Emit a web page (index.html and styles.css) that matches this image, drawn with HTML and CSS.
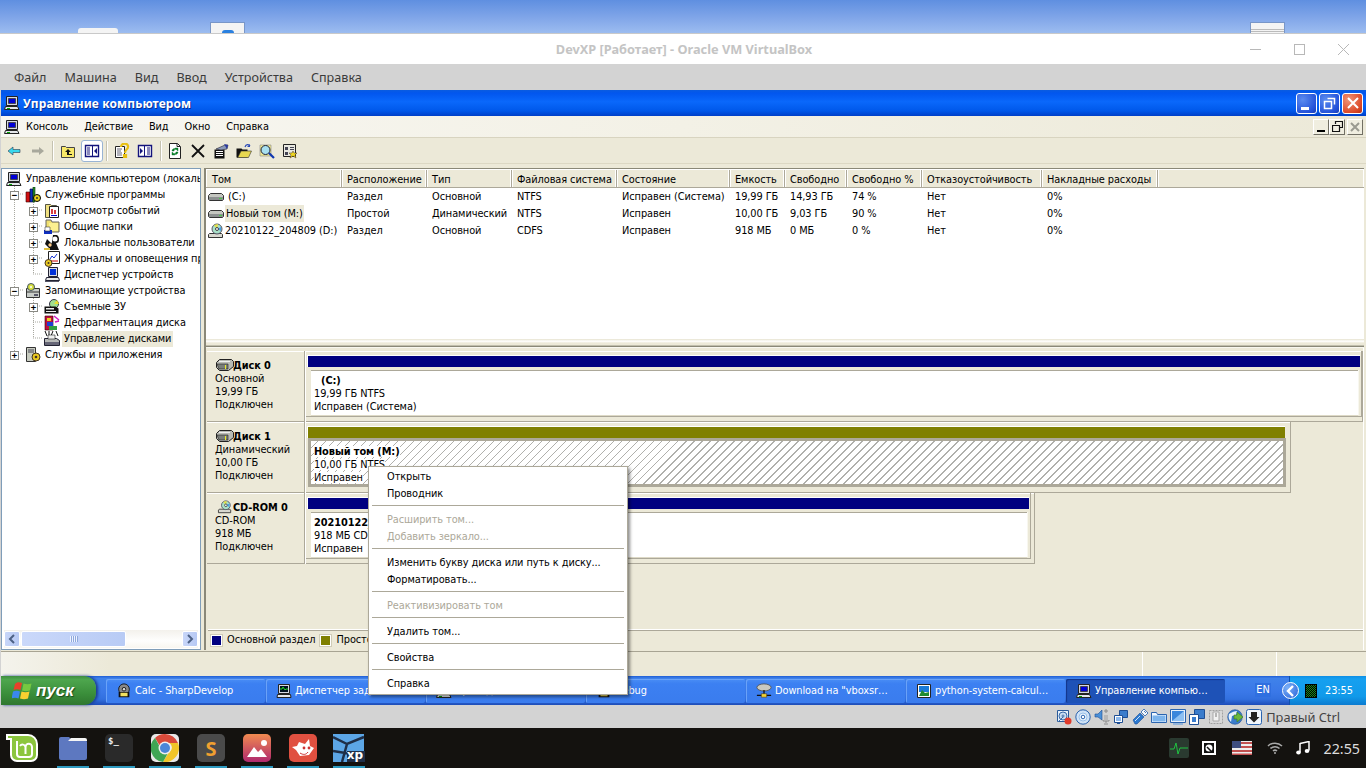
FILE: index.html
```html
<!DOCTYPE html>
<html lang="ru">
<head>
<meta charset="utf-8">
<title>DevXP [Работает] - Oracle VM VirtualBox</title>
<link rel="stylesheet" href="styles.css">
</head>
<body>
<svg class="defs" width="0" height="0">
  <symbol id="pc" viewBox="0 0 16 16"><path d="M2.500 1.500h11v9h-11z" fill="#d5d8e2" stroke="#222"/><path d="M4.500 3.500h7v5h-7z" fill="#0000d8" stroke="#445"/><path d="M1.500 11.500h12l1.500 3H.5z" fill="#e4e6ea" stroke="#222"/><path d="M3 13h3v1H3z" fill="#0a0"/></symbol>
  <symbol id="hdd" viewBox="0 0 16 16"><path d="M2.500 4.500h11l2 2v4l-1 1H1.500l-1-1v-4z" fill="#c4c6c0" stroke="#333"/><path d="M1 8h14v3H1z" fill="#8c9090"/><path d="M11 9h3v1h-3z" fill="#4c4"/></symbol>
  <symbol id="cdd" viewBox="0 0 16 16"><path d="M1.500 10.500h12l1 1v3h-14v-3z" fill="#d8d8d0" stroke="#333"/><circle cx="9" cy="6" r="5" fill="#a8e0c8" stroke="#556"/><path d="M9 6l-3-4 4-1z" fill="#e8e040"/><path d="M9 6l4-2 0 4z" fill="#40a0f0"/><circle cx="9" cy="6" r="1.500" fill="#fff" stroke="#444"/></symbol>
  <symbol id="disk" viewBox="0 0 18 14"><path d="M3.500 1.500h12l2 2v5l-5 4h-9l-3-3v-5z" fill="#b8bab4" stroke="#222"/><path d="M1 6h11v5H3z" fill="#7a7e7a" stroke="#222" stroke-width=".6"/><path d="M9 7l1 0 0 4-1 0z" fill="#ee2"/><path d="M3 3h11v1H3z" fill="#eee"/></symbol>
  <symbol id="tools" viewBox="0 0 16 16"><path d="M1 5h4v10H1z" fill="#d01010" stroke="#300" stroke-width=".6"/><path d="M5 2h3v13H5z" fill="#1030c0" stroke="#003" stroke-width=".6"/><path d="M8 0h2v15H8z" fill="#2a9030" stroke="#030" stroke-width=".6"/><circle cx="12" cy="11" r="3.500" fill="#e8d020" stroke="#000"/><circle cx="12" cy="11" r="1" fill="#333"/></symbol>
  <symbol id="event" viewBox="0 0 16 16"><path d="M1.500 1.500h5l1 1h5v12h-11z" fill="#f0e080" stroke="#554"/><path d="M5.500 3.500h9v11h-9z" fill="#fff" stroke="#222"/><path d="M8 11V6M11 11V7" stroke="#c00" stroke-width="1.500"/><path d="M7 12.500h6" stroke="#00c"/></symbol>
  <symbol id="shared" viewBox="0 0 16 16"><path d="M2 1h5l1 2h7v10H2z" fill="#f0e070" stroke="#666"/><path d="M5 4h9v8H5z" fill="#fbf090"/><path d="M0 11h8v4H0z" fill="#1030c0"/><path d="M1 8h5v4H1z" fill="#fff" stroke="#222" stroke-width=".5"/></symbol>
  <symbol id="users" viewBox="0 0 16 16"><path d="M9 0c4-1 6 1 6 4s-1 4-3 4l3 7H5l3-8z" fill="#111"/><path d="M3 4l8 8-4 3-6-6z" fill="#111"/><circle cx="6" cy="10" r="1.700" fill="#fc8"/><circle cx="11" cy="4" r="2.500" fill="#fff"/><path d="M0 13h6v2H0z" fill="#e0c040"/></symbol>
  <symbol id="logs" viewBox="0 0 16 16"><path d="M4.500 .5h11v12h-11z" fill="#fff" stroke="#222"/><path d="M6 8l2-3 2 2 3-4" fill="none" stroke="#1030d0"/><path d="M6 10h8" stroke="#c00"/><circle cx="4.500" cy="12" r="3.500" fill="#e8c820" stroke="#432"/><circle cx="4.500" cy="12" r="1" fill="#432"/></symbol>
  <symbol id="devmgr" viewBox="0 0 16 16"><path d="M4.500 .5h9v9h-9z" fill="#d8dae0" stroke="#223"/><path d="M6 2h6v6H6z" fill="#0030d8"/><path d="M2.500 10.500h12l1 3h-14z" fill="#e8e8e8" stroke="#223"/><path d="M1 14.500h14" stroke="#556"/></symbol>
  <symbol id="storage" viewBox="0 0 16 16"><path d="M1.500 5.500h13v9h-13z" fill="#c8ccc8" stroke="#333"/><path d="M1 9h14" stroke="#333"/><path d="M9 11h4v2H9z" fill="#556"/><circle cx="6" cy="4" r="3.500" fill="#d8e040" stroke="#456"/><circle cx="6" cy="4" r="1" fill="#fff"/></symbol>
  <symbol id="removable" viewBox="0 0 16 16"><circle cx="10" cy="5" r="4.500" fill="#a0e090" stroke="#334"/><path d="M10 5l3-4 2 4z" fill="#e8e030"/><path d="M.5 7.500h11l3 2v5H.5z" fill="#111"/><path d="M2 9h8v1.500H2zM2 12h10v1H2z" fill="#eee"/></symbol>
  <symbol id="defrag" viewBox="0 0 16 16"><path d="M1 1h8v14H1z" fill="#c01040" stroke="#300" stroke-width=".6"/><path d="M3 3h4v3H3z" fill="#e8d020"/><path d="M3 7h6v4H3z" fill="#2040d0"/><path d="M5 11h8v4H5z" fill="#30a040"/><path d="M10 1l5 4M11 7l4-1" stroke="#d020c0" stroke-width="1.600"/></symbol>
  <symbol id="diskman" viewBox="0 0 16 16"><path d="M1 0l2 5M5 0v5M9 0l-2 5M12 0l2 5" stroke="#111"/><path d="M.5 7.500h12l3 2v5H.5z" fill="#b8bab8" stroke="#223"/><path d="M1 11h14v3H1z" fill="#667"/><path d="M4 4h7v4H4z" fill="#eee" stroke="#222" stroke-width=".6"/></symbol>
  <symbol id="services" viewBox="0 0 16 16"><path d="M1.500 .5h9v14h-9z" fill="#c8ccc0" stroke="#333"/><path d="M3 3h6M3 5h6" stroke="#445"/><circle cx="11" cy="10" r="4" fill="#e8c820" stroke="#432"/><circle cx="11" cy="10" r="1.300" fill="#432"/></symbol>
  <symbol id="back" viewBox="0 0 16 16"><path d="M2 8l5-4v2.500h7v3H7V12z" fill="#38d8ee" stroke="#2a3a50" stroke-width=".6"/></symbol>
  <symbol id="fwd" viewBox="0 0 16 16"><path d="M15 8l-5-4v2.500H3v3h7V12z" fill="#a8a89c"/></symbol>
  <symbol id="up" viewBox="0 0 16 16"><path d="M1.500 3.500h4l1 1h8v10h-13z" fill="#f8e868" stroke="#444"/><path d="M5 9l3-3 3 3H9v2h3v1H7V9z" fill="#111"/></symbol>
  <symbol id="split" viewBox="0 0 16 16"><path d="M1.500 2.500h13v11h-13z" fill="#fff" stroke="#14147c" stroke-width="1.400"/><path d="M8 3h1v10H8z" fill="#14147c"/><path d="M3 5h3M3 7h3M3 9h3M3 11h3" stroke="#14147c"/><path d="M13 5v6l-3-3z" fill="#14147c"/></symbol>
  <symbol id="help" viewBox="0 0 16 16"><path d="M1.500 3.500h9v11h-9z" fill="#fff" stroke="#222"/><path d="M3 6h5M3 8h4M3 10h5M3 12h5" stroke="#667"/><path d="M7 4c0-5 8-4 7 0 0 3-3 2-3 6M10 12h2v2h-2z" fill="none" stroke="#e8c010" stroke-width="2.200"/></symbol>
  <symbol id="splitb" viewBox="0 0 16 16"><path d="M1.500 2.500h13v11h-13z" fill="#fff" stroke="#14147c" stroke-width="1.400"/><path d="M7 3h1v10H7z" fill="#14147c"/><path d="M10 5h3M10 7h3M10 9h3M10 11h3" stroke="#14147c"/><path d="M3 5v6l3-3z" fill="#14147c"/></symbol>
  <symbol id="refresh" viewBox="0 0 16 16"><path d="M2.500 .5h8l3 3v12h-11z" fill="#fff" stroke="#222"/><path d="M10 .5v3h3" fill="none" stroke="#222"/><path d="M5 8c0-2 2-3 4-2l-1-1 3 0 0 3-1-1c-1-1-3-1-3 1zM11 9c0 2-2 3-4 2l1 1-3 0 0-3 1 1c1 1 3 1 3-1z" fill="#0a8a20" stroke="#063" stroke-width=".4"/></symbol>
  <symbol id="del" viewBox="0 0 16 16"><path d="M2 2l12 12M14 2L2 14" stroke="#111" stroke-width="1.800"/></symbol>
  <symbol id="prop" viewBox="0 0 16 16"><path d="M1.500 6.500h10v9h-10z" fill="#111"/><path d="M3 8h7v1H3zM3 10h7v1H3zM3 12h7v1H3z" fill="#fff"/><path d="M3 6l9-4 3 0-1 4-6 1z" fill="#8a98b8" stroke="#223" stroke-width=".6"/><path d="M11 1l4 1-1 4z" fill="#2838a0"/></symbol>
  <symbol id="open" viewBox="0 0 16 16"><path d="M.5 5.500h5l1 1h5v8H.5z" fill="#111"/><path d="M2 14L5 8h10.500l-3 6.500H1z" fill="#e8d850" stroke="#333" stroke-width=".6"/><path d="M9 4c1-3 4-3 5-1" fill="none" stroke="#2a4ab8" stroke-width="1.200"/><path d="M14 1v3h-3z" fill="#2a4ab8"/></symbol>
  <symbol id="find" viewBox="0 0 16 16"><path d="M1 2h11v11H1z" fill="#f0e890" stroke="#888" stroke-width=".6"/><circle cx="6.500" cy="7" r="4.500" fill="#a8e0f0" stroke="#223"/><path d="M10 10l5 5" stroke="#1038b0" stroke-width="2.200"/></symbol>
  <symbol id="wiz" viewBox="0 0 16 16"><path d="M1.500 1.500h12v12h-12z" fill="#e8e8e0" stroke="#222"/><path d="M3 4h3v3H3zM8 4h4v1H8zM8 6h4v1H8zM3 9h3v3H3z" fill="#445"/><path d="M11 8l1 2 3 0-2 2 1 3-3-2-3 2 1-3-2-2 3 0z" fill="#f0d820" stroke="#432" stroke-width=".5"/></symbol>
  <symbol id="gear" viewBox="0 0 18 18"><circle cx="9" cy="7" r="6" fill="#888" stroke="#111"/><circle cx="9" cy="7" r="2" fill="#ddd" stroke="#111"/><path d="M3 10h12v6H3z" fill="#111"/><path d="M5 11h8v4H5z" fill="#f0e060"/></symbol>
  <symbol id="net" viewBox="0 0 18 18"><ellipse cx="9" cy="5" rx="8" ry="4" fill="#c8c8c0" stroke="#555"/><path d="M9 8v5M1 14h16" stroke="#111" stroke-width="1.400"/><path d="M6 12h6v4H6z" fill="#f0d030" stroke="#432" stroke-width=".6"/></symbol>
  <symbol id="pic" viewBox="0 0 16 16"><path d="M1.500 1.500h13v13h-13z" fill="#fff" stroke="#222"/><path d="M3 3h10v6H3z" fill="#1a7ad8"/><path d="M3 13l3-6 3 3 4-1v4z" fill="#1e8a30"/></symbol>
  <symbol id="taskmgr" viewBox="0 0 16 16"><path d="M2.500 1.500h11v9h-11z" fill="#d5d8e2" stroke="#222"/><path d="M4 3h8v6H4z" fill="#012"/><path d="M4 6l2 0 1-2 2 3 1-1h2" fill="none" stroke="#2d2"/><path d="M1.500 11.500h13l.5 3H1z" fill="#e4e6ea" stroke="#222"/></symbol>
  <symbol id="flag" viewBox="0 0 22 20"><path d="M3 3c2-2 4-2 7-1l-1.500 7c-2-1-5-1-7 0z" fill="#e8402a"/><path d="M11.500 2.500c3 1 5 1 8 0l-1.500 7c-3 1-5 1-8 0z" fill="#76c840"/><path d="M1 10.500c2-1 5-1 7 0l-1.500 7c-2-1-5-1-7 0z" fill="#3a88ee"/><path d="M9.500 10.500c3 1 5 1 8 0l-1.500 7c-3 1-5 1-8 0z" fill="#f8d030"/></symbol>
  <symbol id="vs-hdd" viewBox="0 0 16 16"><path d="M1.500 1.500h11v11h-11z" fill="#e6f0fa" stroke="#2a5a9a"/><circle cx="7" cy="7" r="4" fill="#c8dcf0" stroke="#3a6aa8"/><circle cx="7" cy="7" r="1" fill="#fff" stroke="#3a6aa8"/><path d="M2 13l5-5" stroke="#3a6aa8"/><circle cx="12" cy="12" r="3.500" fill="#e03a2a"/></symbol>
  <symbol id="vs-cd" viewBox="0 0 16 16"><circle cx="8" cy="8" r="7.200" fill="#cfe2f6" stroke="#2a64b0"/><circle cx="8" cy="8" r="4" fill="#eef6ff" stroke="#9ac0e8"/><circle cx="8" cy="8" r="1.800" fill="#fff" stroke="#2a64b0"/></symbol>
  <symbol id="vs-aud" viewBox="0 0 16 16"><path d="M1 5h3l4-4v10L4 8H1z" fill="#4a90d8" stroke="#1e4e94" stroke-width=".6"/><path d="M10 6h4v5h-4z" fill="#b8b8b8"/><path d="M11 1h2v2h-2zM9 11v1h6v-1M12 12v2M10 15h4" stroke="#8a8a8a" fill="none"/></symbol>
  <symbol id="vs-net" viewBox="0 0 16 16"><path d="M6.500 1.500h8v7h-8z" fill="#3a7ccc" stroke="#1e4e94"/><path d="M1.500 6.500h8v7h-8z" fill="#fff" stroke="#1e4e94"/><path d="M3 8h5v4H3z" fill="#8cb8ec"/><path d="M4 14.500h3" stroke="#1e4e94"/></symbol>
  <symbol id="vs-usb" viewBox="0 0 16 16"><path d="M1 11l7-7 4 4-7 7H3z" fill="#2a78d0" stroke="#1e4e94" stroke-width=".6"/><path d="M9 3l3-3 4 4-3 3z" fill="#f4f8fc" stroke="#4a7ab8"/><path d="M12 2l1 1M14 4l-1-1" stroke="#4a7ab8"/><path d="M3 12l5-5" stroke="#cfe4fa"/></symbol>
  <symbol id="vs-fold" viewBox="0 0 16 16"><path d="M.5 3.500h5l1 2h9v8H.5z" fill="#f0f7ff" stroke="#2a64b0"/><path d="M1.500 6.500h13v6h-13z" fill="#7cb4ec"/></symbol>
  <symbol id="vs-disp" viewBox="0 0 16 16"><path d="M.5 .5h15v13H.5z" fill="#e6f0fa" stroke="#2a64b0"/><path d="M2 2h12v10H2z" fill="#3a86dc"/><path d="M2 12L14 2v10z" fill="#8ec0f2"/><path d="M3 15h10" stroke="#7aa8dc" stroke-width="1.400"/></symbol>
  <symbol id="vs-shot" viewBox="0 0 16 16"><path d="M5.500 .5h10v9h-10z" fill="#3a7ccc" stroke="#1e4e94"/><path d="M.5 5.500h9v10h-9z" fill="#fff" stroke="#1e4e94"/><path d="M3 8h4v5H3z" fill="#3a7ccc"/></symbol>
  <symbol id="vs-chip" viewBox="0 0 16 16"><path d="M1.500 1.500h13v13h-13z" fill="#d8d8d8" stroke="#a0a0a0" stroke-dasharray="2 1"/><path d="M5 3h6v9H5z" fill="#f2f2f2" stroke="#a8a8a8"/><path d="M8 4v4" stroke="#a0a0a0" stroke-width="1.500"/></symbol>
  <symbol id="vs-glob" viewBox="0 0 16 16"><circle cx="8" cy="8" r="7.300" fill="#3a7ccc" stroke="#1e4e94" stroke-width=".6"/><path d="M2 5c3-2 6-3 8-3l-1 4-4 1-1 6c-2-2-3-5-2-8z" fill="#e8f2fc"/><path d="M7 6h3V3l6 5-6 5v-3H7z" fill="#6cb83c" stroke="#3a7a1c" stroke-width=".6"/></symbol>
  <symbol id="vs-cap" viewBox="0 0 16 16"><rect x=".5" y=".5" width="15" height="15" rx="2" fill="#f0f6fc" stroke="#2a64b0"/><path d="M5 3h6v5h2.500L8 13.500 2.500 8H5z" fill="#222"/></symbol>
</svg>

<div class="sky">
  <div class="desk-a"></div>
  <div class="desk-b"><span class="arc"></span></div>
  <div class="desk-c"></div>
</div>

<div class="vbox">
  <header class="vb-title">
    <span class="vb-name">DevXP [Работает] - Oracle VM VirtualBox</span>
    <div class="vb-controls">
      <span class="vb-min"></span>
      <span class="vb-max"></span>
      <svg class="vb-close" width="11" height="11" viewBox="0 0 11 11"><path d="M0 0l11 11M11 0L0 11" stroke="#b8b8b8"/></svg>
    </div>
  </header>
  <nav class="vb-menu">
    <span>Файл</span><span>Машина</span><span>Вид</span><span>Ввод</span><span>Устройства</span><span>Справка</span>
  </nav>

  <div class="guest">
    <div class="xp-title">
      <svg class="i16"><use href="#pc"/></svg>
      <span class="xp-name">Управление компьютером</span>
      <div class="xp-btns">
        <span class="xb"><span class="xb-min"></span></span>
        <span class="xb"><svg width="13" height="13" viewBox="0 0 13 13"><path d="M4.500 1.500h7v6M1.500 4.500h7v7h-7z" fill="none" stroke="#fff" stroke-width="1.500"/></svg></span>
        <span class="xb red"><svg width="12" height="12" viewBox="0 0 12 12"><path d="M1 1l10 10M11 1L1 11" stroke="#fff" stroke-width="2"/></svg></span>
      </div>
    </div>

    <div class="xp-menu">
      <svg class="i16"><use href="#pc"/></svg>
      <div class="xp-menu-items"><span>Консоль</span><span>Действие</span><span>Вид</span><span>Окно</span><span>Справка</span></div>
      <div class="mdi">
        <span class="mdi-b"><span class="m-min"></span></span>
        <span class="mdi-b"><svg width="11" height="11" viewBox="0 0 11 11"><path d="M3.500 3V.5h7v6H8M.5 4.500h7v6h-7z" fill="none" stroke="#111" stroke-width="1.200"/></svg></span>
        <span class="mdi-b off"><svg width="10" height="10" viewBox="0 0 10 10"><path d="M1 1l8 8M9 1L1 9" stroke="#9a9a90" stroke-width="2"/></svg></span>
      </div>
    </div>

    <div class="xp-tools">
      <svg class="t"><use href="#back"/></svg>
      <svg class="t"><use href="#fwd"/></svg>
      <span class="sep"></span>
      <svg class="t"><use href="#up"/></svg>
      <span class="tb-on"><svg class="t"><use href="#split"/></svg></span>
      <span class="sep"></span>
      <svg class="t"><use href="#help"/></svg>
      <svg class="t"><use href="#splitb"/></svg>
      <span class="sep s3"></span>
      <svg class="t"><use href="#refresh"/></svg>
      <svg class="t"><use href="#del"/></svg>
      <svg class="t"><use href="#prop"/></svg>
      <svg class="t"><use href="#open"/></svg>
      <svg class="t"><use href="#find"/></svg>
      <svg class="t"><use href="#wiz"/></svg>
    </div>

    <div class="xp-main">
      <aside class="tree">
        <svg class="tree-lines" width="200" height="400">
          <path d="M14.500 186V358M14 194h10M14 290h10M14 354h10M33.500 202V274M33 210h10M33 226h10M33 242h10M33 258h10M33 274h10M33.500 298V338M33 306h10M33 322h10M33 338h10" stroke="#a8a8a0" stroke-dasharray="1 1" fill="none"/>
        </svg>
        <div class="tree-body">
          <div class="tr l0"><svg class="i16"><use href="#pc"/></svg><span>Управление компьютером (локаль</span></div>
          <div class="tr l1"><b class="ex">−</b><svg class="i16"><use href="#tools"/></svg><span>Служебные программы</span></div>
          <div class="tr l2"><b class="ex">+</b><svg class="i16"><use href="#event"/></svg><span>Просмотр событий</span></div>
          <div class="tr l2"><b class="ex">+</b><svg class="i16"><use href="#shared"/></svg><span>Общие папки</span></div>
          <div class="tr l2"><b class="ex">+</b><svg class="i16"><use href="#users"/></svg><span>Локальные пользователи</span></div>
          <div class="tr l2"><b class="ex">+</b><svg class="i16"><use href="#logs"/></svg><span>Журналы и оповещения пр</span></div>
          <div class="tr l2"><b class="ex none"></b><svg class="i16"><use href="#devmgr"/></svg><span>Диспетчер устройств</span></div>
          <div class="tr l1"><b class="ex">−</b><svg class="i16"><use href="#storage"/></svg><span>Запоминающие устройства</span></div>
          <div class="tr l2"><b class="ex">+</b><svg class="i16"><use href="#removable"/></svg><span>Съемные ЗУ</span></div>
          <div class="tr l2"><b class="ex none"></b><svg class="i16"><use href="#defrag"/></svg><span>Дефрагментация диска</span></div>
          <div class="tr l2"><b class="ex none"></b><svg class="i16"><use href="#diskman"/></svg><span class="sel">Управление дисками</span></div>
          <div class="tr l1"><b class="ex">+</b><svg class="i16"><use href="#services"/></svg><span>Службы и приложения</span></div>
        </div>
        <div class="hscroll">
          <span class="sb-btn"><svg width="8" height="10" viewBox="0 0 8 10"><path d="M6 1L2 5l4 4" fill="none" stroke="#4d6185" stroke-width="2"/></svg></span>
          <span class="sb-thumb"><span class="grip"></span></span>
          <span class="sb-btn end"><svg width="8" height="10" viewBox="0 0 8 10"><path d="M2 1l4 4-4 4" fill="none" stroke="#4d6185" stroke-width="2"/></svg></span>
        </div>
      </aside>

      <section class="right">
        <div class="list">
          <div class="row head">
            <span>Том</span><span>Расположение</span><span>Тип</span><span>Файловая система</span><span>Состояние</span><span>Емкость</span><span>Свободно</span><span>Свободно %</span><span>Отказоустойчивость</span><span>Накладные расходы</span><span></span>
          </div>
          <div class="row">
            <span class="vol"><svg class="i16"><use href="#hdd"/></svg><em class="gap">(C:)</em></span><span>Раздел</span><span>Основной</span><span>NTFS</span><span>Исправен (Система)</span><span>19,99 ГБ</span><span>14,93 ГБ</span><span>74 %</span><span>Нет</span><span>0%</span><span></span>
          </div>
          <div class="row">
            <span class="vol"><svg class="i16"><use href="#hdd"/></svg><em class="hl">Новый том (M:)</em></span><span>Простой</span><span>Динамический</span><span>NTFS</span><span>Исправен</span><span>10,00 ГБ</span><span>9,03 ГБ</span><span>90 %</span><span>Нет</span><span>0%</span><span></span>
          </div>
          <div class="row">
            <span class="vol"><svg class="i16"><use href="#cdd"/></svg><em>20210122_204809 (D:)</em></span><span>Раздел</span><span>Основной</span><span>CDFS</span><span>Исправен</span><span>918 МБ</span><span>0 МБ</span><span>0 %</span><span>Нет</span><span>0%</span><span></span>
          </div>
        </div>
        <div class="split-h"></div>
        <div class="graph">
          <div class="disk">
            <div class="dlabel">
              <div class="dname"><svg class="dico"><use href="#disk"/></svg>Диск 0</div>
              <div>Основной</div><div>19,99 ГБ</div><div>Подключен</div>
            </div>
            <div class="dvol w0">
              <div class="dinner">
                <div class="bar navy"></div>
                <div class="part">
                  <div class="pname pad">(C:)</div><div>19,99 ГБ NTFS</div><div>Исправен (Система)</div>
                </div>
              </div>
            </div>
          </div>
          <div class="disk">
            <div class="dlabel">
              <div class="dname"><svg class="dico"><use href="#disk"/></svg>Диск 1</div>
              <div>Динамический</div><div>10,00 ГБ</div><div>Подключен</div>
            </div>
            <div class="dvol w1">
              <div class="dinner">
                <div class="bar olive"></div>
                <div class="part hatch">
                  <div class="pname"><i>Новый том  (M:)</i></div><div><i>10,00 ГБ NTFS</i></div><div><i>Исправен</i></div>
                </div>
              </div>
            </div>
          </div>
          <div class="disk">
            <div class="dlabel">
              <div class="dname"><svg class="dico"><use href="#cdd"/></svg>CD-ROM 0</div>
              <div>CD-ROM</div><div>918 МБ</div><div>Подключен</div>
            </div>
            <div class="dvol w2">
              <div class="dinner">
                <div class="bar navy"></div>
                <div class="part">
                  <div class="pname">20210122_204809 (D:)</div><div>918 МБ CDFS</div><div>Исправен</div>
                </div>
              </div>
            </div>
          </div>
          <div class="legend">
            <span class="sw navy"></span><span class="lg1">Основной раздел</span><span class="sw olive"></span><span>Простой том</span>
          </div>
        </div>
      </section>
    </div>

    <div class="xp-status"><span class="st1"></span><span class="st2"></span></div>

    <div class="taskbar">
      <div class="start"><svg width="22" height="20"><use href="#flag"/></svg><span>пуск</span></div>
      <div class="tasks">
        <div class="task"><svg class="i18"><use href="#gear"/></svg><span>Calc - SharpDevelop</span></div>
        <div class="task"><svg class="i18"><use href="#taskmgr"/></svg><span>Диспетчер задач</span></div>
        <div class="task"><svg class="i18"><use href="#pc"/></svg><span>Проводник</span></div>
        <div class="task"><svg class="i18"><use href="#gear"/></svg><span>Debug</span></div>
        <div class="task"><svg class="i18"><use href="#net"/></svg><span>Download на "vboxsr…</span></div>
        <div class="task"><svg class="i18"><use href="#pic"/></svg><span>python-system-calcul…</span></div>
        <div class="task active"><svg class="i18"><use href="#pc"/></svg><span>Управление компью…</span></div>
      </div>
      <span class="lang">EN</span>
      <div class="tray">
        <span class="tray-arrow"><svg width="10" height="12" viewBox="0 0 10 12"><path d="M7 1L2 6l5 5" fill="none" stroke="#fff" stroke-width="2.400"/></svg></span>
        <span class="tray-ico"></span>
        <span class="clock">23:55</span>
      </div>
    </div>
  </div>

  <footer class="vb-status">
    <svg class="i16"><use href="#vs-hdd"/></svg><svg class="i16"><use href="#vs-cd"/></svg><svg class="i16"><use href="#vs-aud"/></svg><svg class="i16"><use href="#vs-net"/></svg><svg class="i16"><use href="#vs-usb"/></svg><svg class="i16"><use href="#vs-fold"/></svg><svg class="i16"><use href="#vs-disp"/></svg><svg class="i16"><use href="#vs-shot"/></svg><svg class="i16"><use href="#vs-chip"/></svg><svg class="i16"><use href="#vs-glob"/></svg><svg class="i16"><use href="#vs-cap"/></svg>
    <span class="ctrl">Правый Ctrl</span>
  </footer>
</div>

<footer class="panel">
  <div class="launch">
    <svg class="mint" width="32" height="28" viewBox="0 0 32 28"><path d="M0 0h22a10 10 0 0 1 10 10v11a7 7 0 0 1-7 7H11a7 7 0 0 1-7-7V6H0z" fill="#fff"/><path d="M2 2h20a8 8 0 0 1 8 8v11a5 5 0 0 1-5 5H11a5 5 0 0 1-5-5V4H2z" fill="#8cc63e"/><path d="M11 7v13a3 3 0 0 0 3 3h9a3 3 0 0 0 3-3V13a3 3 0 0 0-6.500 0v7M19.500 13a3 3 0 0 0-5.500-1" fill="none" stroke="#fff" stroke-width="2"/></svg>
    <div class="app ap-folder"><svg width="30" height="24" viewBox="0 0 30 24"><path d="M1 3a2 2 0 0 1 2-2h8l3 3h13a2 2 0 0 1 2 2v16a2 2 0 0 1-2 2H3a2 2 0 0 1-2-2z" fill="#5d78c0"/><path d="M1 5h9l3-3h14a2 2 0 0 1 2 2v1z" fill="#f4f4f4"/></svg></div>
    <div class="app ap-term"><span>$_</span></div>
    <div class="app"><svg width="28" height="28" viewBox="0 0 28 28"><rect width="28" height="28" rx="5" fill="#e8e8e8"/><path d="M14 0a14 14 0 0 1 13 9H14a5 5 0 0 0-5 3L4 4A14 14 0 0 1 14 0z" fill="#d94a3a"/><path d="M27 9a14 14 0 0 1-15 19l6-10a5 5 0 0 0 0-9z" fill="#f0c428"/><path d="M12 28A14 14 0 0 1 4 4l6 11a5 5 0 0 0 7 4z" fill="#3fa654"/><circle cx="14" cy="14" r="6.500" fill="#eee"/><circle cx="14" cy="14" r="5" fill="#4a86d8"/></svg></div>
    <div class="app ap-subl"><span>S</span></div>
    <div class="app ap-img"><svg width="28" height="28" viewBox="0 0 28 28"><circle cx="21" cy="9" r="3" fill="#fff"/><path d="M4 23l7-10 4 5 3-3 6 8z" fill="#fff"/></svg></div>
    <div class="app ap-gimp"><svg width="28" height="28" viewBox="0 0 28 28"><path d="M3 13l5-1 2-4 6 2 4-5 1 7 4 2-5 7-9 1-4-6z" fill="#fff"/><circle cx="15" cy="14" r="1.400" fill="#c33"/><circle cx="20" cy="14" r="1.400" fill="#c33"/><path d="M11 19c3 2 6 2 8-1" stroke="#c33" fill="none"/></svg></div>
    <div class="app ap-xp"><svg width="32" height="28" viewBox="0 0 32 28"><path d="M0 0h31v28H0z" fill="#5ca6e6"/><path d="M0 3l14 7L31 3M14 10L9 28M0 17l31 5" stroke="#1f2f48" stroke-width="2.500" fill="none"/><path d="M14 17h18v11H14z" fill="#1f2f48"/></svg><span>xp</span></div>
  </div>
  <div class="sys">
    <svg class="sys-mon" width="20" height="20" viewBox="0 0 20 20"><rect width="20" height="20" rx="2" fill="#2a3a30"/><path d="M1 11h4l2-6 2 11 2-6h8" fill="none" stroke="#20c040"/></svg>
    <svg class="sys-disk" width="14" height="14" viewBox="0 0 14 14"><rect x="1" y="1" width="12" height="12" fill="#111" stroke="#fff" stroke-width="2"/><circle cx="7" cy="7" r="3.500" fill="#fff"/><path d="M5 6l5 5" stroke="#111" stroke-width="1.500"/></svg>
    <svg class="sys-flag" width="20" height="14" viewBox="0 0 20 14"><path d="M0 0h20v14H0z" fill="#eee"/><path d="M0 1h20v2H0zM0 5h20v2H0zM0 9h20v2H0zM0 12.500h20V14H0z" fill="#c25050"/><path d="M0 0h9v7H0z" fill="#3e4e80"/></svg>
    <svg class="sys-wifi" width="16" height="12" viewBox="0 0 16 12"><path d="M1 4a10 10 0 0 1 14 0M3.500 6.500a6.500 6.500 0 0 1 9 0M6 9a3 3 0 0 1 4 0" fill="none" stroke="#aaa" stroke-width="1.500"/><circle cx="8" cy="11" r="1" fill="#aaa"/></svg>
    <svg class="sys-note" width="14" height="14" viewBox="0 0 14 14"><path d="M4 2.500l9-2v9" fill="none" stroke="#fff" stroke-width="1.500"/><path d="M4 2v9" stroke="#fff" stroke-width="1.500"/><ellipse cx="2.500" cy="11.500" rx="2.300" ry="2" fill="#fff"/><ellipse cx="11" cy="10" rx="2.300" ry="2" fill="#fff"/></svg>
    <span class="sys-clock">22:55</span>
  </div>
  <div class="dots"><span></span><span></span><span></span><span></span><span></span><span></span><span></span></div>
</footer>

<div class="ctx">
  <div class="mi">Открыть</div>
  <div class="mi">Проводник</div>
  <div class="ms"></div>
  <div class="mi dis">Расширить том...</div>
  <div class="mi dis">Добавить зеркало...</div>
  <div class="ms"></div>
  <div class="mi">Изменить букву диска или путь к диску...</div>
  <div class="mi">Форматировать...</div>
  <div class="ms"></div>
  <div class="mi dis">Реактивизировать том</div>
  <div class="ms"></div>
  <div class="mi">Удалить том...</div>
  <div class="ms"></div>
  <div class="mi">Свойства</div>
  <div class="ms"></div>
  <div class="mi">Справка</div>
</div>
</body>
</html>
```

FILE: styles.css
```css
* { box-sizing: border-box; }
html, body { margin: 0; padding: 0; }
body {
  width: 1366px; height: 768px; overflow: hidden; position: relative;
  font: 9.8px/16px "DejaVu Sans", sans-serif; letter-spacing: -.08px; color: #000; background: #7fa5e8;
}
.defs { position: absolute; }
em, i { font-style: normal; }
svg { display: block; flex: none; }
.i16 { width: 16px; height: 16px; }
.i18 { width: 16px; height: 16px; }

/* desktop strip */
.sky { height: 33px; position: relative; overflow: hidden; background: linear-gradient(#5f8fe0, #7ea4e8 50%, #9cbcf0); }
.desk-a { position: absolute; left: 78px; top: 28px; width: 40px; height: 5px; background: #f4f4f4; border-radius: 3px 3px 0 0; }
.desk-b, .desk-c { position: absolute; top: 22px; width: 35px; height: 11px; background: #f4f4f4; border: 1px solid #7896c8; border-bottom: 0; }
.desk-b { left: 210px; }
.desk-c { left: 1250px; background: linear-gradient(#f4f4f4 6px, #bbb 6px 7px, #f4f4f4 7px 8px, #bbb 8px 9px, #f4f4f4 9px); }
.arc { display: block; width: 12px; height: 3px; border-radius: 8px 8px 0 0; background: #2a80e0; margin: 7px 0 0 11px; }

/* virtualbox window */
.vbox { height: 695px; display: flex; flex-direction: column; background: #d3d3d3; }
.vb-title { height: 31px; background: #fff; border-top: 1px solid #c9c9c9; position: relative; display: flex; align-items: center; justify-content: center; padding-left: 2px; }
.vb-name { font: bold 12.75px "Noto Sans", sans-serif; letter-spacing: 0; color: #c4c4c4; }
.vb-controls { position: absolute; right: 0; top: 0; width: 116px; height: 30px; display: flex; align-items: center; }
.vb-min { width: 11px; height: 1px; background: #b8b8b8; margin-left: 0; }
.vb-max { width: 11px; height: 11px; border: 1px solid #b8b8b8; margin-left: 33px; }
.vb-close { margin-left: 33px; }
.vb-menu { height: 26px; display: flex; align-items: center; padding-left: 14px; gap: 18px; font: 12.6px "Noto Sans", sans-serif; letter-spacing: 0; color: #3a3a3a; }

.guest { margin-left: 1px; flex: 1; display: flex; flex-direction: column; min-height: 0; background: #ece9d8; }

.xp-title { height: 26px; flex: none; display: flex; align-items: center; padding: 0 3px; background: linear-gradient(#0a5ce0, #0256ee 12%, #0a68fb 45%, #0058ea 80%, #003fc8); }
.xp-name { margin: 1px 0 0 3px; font: bold 12px "Noto Sans", sans-serif; letter-spacing: .12px; color: #fff; text-shadow: 1px 1px 0 #0a2f90; }
.xp-btns { margin-left: auto; display: flex; gap: 2px; }
.xb { width: 21px; height: 21px; border: 1px solid #fff; border-radius: 3px; background: radial-gradient(circle at 30% 30%, #5b8cf0, #2250d8 75%, #1a3cb0); display: flex; align-items: center; justify-content: center; position: relative; }
.xb-min { position: absolute; left: 4px; bottom: 3px; width: 8px; height: 3px; background: #fff; }
.xb.red { background: radial-gradient(circle at 30% 30%, #f09478, #dc4a28 70%, #b83012); }

.xp-menu { height: 22px; flex: none; display: flex; align-items: center; padding: 1px 0 0 3px; background: linear-gradient(90deg, #f8f7f2, #f3f1e6 50%, #ece9d8); border-bottom: 1px solid #d8d4c0; }
.xp-menu-items { display: flex; gap: 16px; margin-left: 6px; }
.mdi { margin-left: auto; margin-right: 3px; display: flex; gap: 0; height: 17px; }
.mdi-b { width: 16px; height: 16px; background: #f0eee0; border-right: 1px solid #716f64; border-bottom: 1px solid #716f64; border-left: 1px solid #fff; border-top: 1px solid #fff; display: flex; align-items: center; justify-content: center; position: relative; }
.mdi-b.off { margin-left: 2px; }
.m-min { position: absolute; left: 3px; bottom: 2px; width: 8px; height: 2px; background: #000; }

.xp-tools { height: 26px; flex: none; display: flex; align-items: center; padding-left: 5px; background: #ece9d8; border-bottom: 1px solid #dcd8c4; gap: 7px; }
.t { width: 16px; height: 16px; }
.sep { width: 1px; height: 20px; background: #c5c2b0; box-shadow: 1px 0 0 #fff; }
.tb-on { width: 22px; height: 22px; margin: 0 -4px 0 -2px; border: 1px solid #99b4d4; border-radius: 3px; background: #fff; display: flex; align-items: center; justify-content: center; }
.s3 { margin-right: -1px; }

.xp-main { height: 488px; flex: none; display: flex; padding: 4px 2px 1px 0; gap: 3px; background: #ece9d8; border-bottom: 1px solid #a8a493; }
.tree { width: 200px; flex: none; background: #fff; border: 1px solid #7f9db9; position: relative; display: flex; flex-direction: column; }
.tree-lines { position: absolute; left: -2px; top: -169px; pointer-events: none; overflow: visible; }
.tree-body { flex: 1; padding-top: 2px; overflow: hidden; position: relative; }
.tr { height: 16px; display: flex; align-items: center; white-space: nowrap; }
.tr svg { margin-right: 4px; }
.l0 { padding-left: 4px; }
.l1 { padding-left: 8px; }
.l2 { padding-left: 27px; }
.ex { width: 9px; height: 9px; margin-right: 6px; flex: none; background: #fff; border: 1px solid #8a8a84; font: bold 9px/7px "DejaVu Sans Mono", monospace; letter-spacing: 0; text-align: center; color: #000; }
.ex.none { visibility: hidden; }
.sel { background: #ece9d8; padding: 0 2px; margin-left: -2px; }

.hscroll { height: 18px; flex: none; margin: 0 2px 1px 2px; display: flex; align-items: center; background: linear-gradient(#f3f1ec, #fefefd 60%, #f8f6f0); }
.sb-btn { width: 16px; height: 16px; flex: none; border: 1px solid #fff; border-radius: 2px; background: linear-gradient(90deg, #c8d6f8, #b7c9f4); display: flex; align-items: center; justify-content: center; }
.sb-btn.end { margin-left: auto; }
.sb-thumb { margin-left: 1px; width: 105px; height: 16px; border: 1px solid #fff; border-radius: 2px; background: linear-gradient(90deg, #cad8fa, #b8cbf5); display: flex; align-items: center; justify-content: center; }
.grip { width: 8px; height: 6px; background: repeating-linear-gradient(90deg, #eef3ff 0 1px, #8ea8dc 1px 2px); }

.right { flex: 1; min-width: 0; display: flex; flex-direction: column; border-top: 1px solid #8a8878; border-left: 2px solid #8a8878; }
.list { height: 170px; flex: none; background: #fff; overflow: hidden; padding-top: 1px; }
.row { height: 17px; display: grid; grid-template-columns: 136px 85px 85px 105px 113px 55px 62px 75px 120px 116px 1fr; align-items: center; white-space: nowrap; }
.row > span { padding-left: 5px; overflow: hidden; }
.row.head { height: 18px; background: #ece9d8; border-bottom: 1px solid #aca899; }
.row.head > span { height: 17px; border-right: 1px solid #aca899; box-shadow: inset -1px 0 0 #fff, inset 1px 0 0 #fff; line-height: 19px; }
.row.head > span:first-child { padding-left: 6px; }
.row.head > span:last-child { border-right: 0; }
.row > .vol { display: flex; align-items: center; padding-left: 2px; }
.vol svg { margin-right: 1px; }
.gap { padding-left: 3px; }
.hl { background: #ece9d8; padding: 0 1px; height: 17px; line-height: 17px; }

.split-h { height: 9px; flex: none; background: linear-gradient(#e6e3d0, #fff 25%, #ece9d8 45%, #ece9d8 70%, #8a8878 75%, #8a8878 85%, #f8f7ef 90%); }
.graph { flex: 1; min-height: 0; background: #ece9d8; padding: 3px 0 0 1px; display: flex; flex-direction: column; border-right: 1px solid #fff; }
.disk { height: 71px; flex: none; display: flex; background: #ece9d8; }
.dlabel { width: 98px; height: 71px; flex: none; padding: 7px 0 0 8px; line-height: 13px; border-right: 1px solid #aca899; border-bottom: 1px solid #aca899; box-shadow: 1px 0 0 #fff, inset 0 1px 0 #fff; }
.dname { font-weight: bold; display: flex; align-items: center; height: 14px; margin-left: 1px; }
.dico { width: 18px; height: 14px; margin-right: -1px; }
.dvol { margin-left: 1px; height: 71px; border-right: 1px solid #aca899; border-bottom: 1px solid #aca899; box-shadow: inset 0 1px 0 #fff; }
.w0 { width: 1057px; }
.w1 { width: 985px; }
.w2 { width: 729px; }
.dinner { height: 66px; padding: 4px 0 0 1px; border-right: 1px solid #aca899; border-bottom: 1px solid #aca899; }
.w0 .dinner { width: 1056px; }
.w1 .dinner { width: 981px; border-color: transparent; }
.w2 .dinner { width: 725px; }
.bar { height: 12px; border: solid #fff; border-width: 1px 0 0 1px; margin-right: 1px; }
.navy { background: #000080; }
.olive { background: #808000; }
.part { margin: 3px 3px 0 4px; height: 45px; background: #fff; border-top: 1px solid #aca899; padding: 3px 0 0 3px; line-height: 13px; white-space: nowrap; overflow: hidden; box-shadow: 0 1px 0 #ddd9c6, 1px 0 0 #f8f7ef; }
.pname { font-weight: bold; }
.pad { padding-left: 7px; }
.part.hatch { height: 49px; margin: 0 0 0 1px; border: 3px solid #aca899; padding: 4px 0 0 3px; background: repeating-linear-gradient(-45deg, #fff 0 4.700px, #b0b0ac 4.700px 5.660px); box-shadow: none; }
.hatch i { background: #fff; }
.legend { margin-top: auto; height: 21px; margin-left: 1px; flex: none; display: flex; align-items: center; padding-left: 3px; border-top: 1px solid #fff; box-shadow: inset 0 1px 0 #aca899; }
.sw { width: 11px; height: 11px; flex: none; border: 1px solid #fff; outline: 1px solid #d0ccb8; margin-right: 5px; }
.lg1 { margin-right: 5px; }

.xp-status { flex: 1; min-height: 0; display: flex; background: linear-gradient(90deg, #f4f3ec, #ece9d8 8%); }
.st1 { width: 1142px; border-right: 1px solid #fff; }
.st2 { width: 134px; border-right: 1px solid #fff; }

.taskbar { height: 29px; flex: none; display: flex; align-items: center; position: relative; background: linear-gradient(#1f5ed6, #3f82ea 8%, #3a78e8 55%, #3270df 80%, #1d4cb8); color: #fff; }
.start { width: 95px; height: 29px; flex: none; display: flex; align-items: center; padding-left: 11px; gap: 2px; border-radius: 0 12px 12px 0; background: linear-gradient(#3f8c3f, #4ea64e 12%, #3b8f3b 60%, #2f772f); box-shadow: 2px 0 3px #1a3a90; }
.start span { font: italic bold 17px "Liberation Sans", sans-serif; letter-spacing: 0; text-shadow: 1px 1px 1px #1a4a1a; }
.tasks { display: flex; margin-left: 10px; gap: 1px; }
.task { width: 159px; height: 24px; border-radius: 2px; background: linear-gradient(#4a8ef5, #3c80f2 20%, #3a7cee); display: flex; align-items: center; padding-left: 10px; gap: 3px; white-space: nowrap; overflow: hidden; box-shadow: inset 1px 1px 0 #6aa2f8; }
.task.active { background: #1e52b7; box-shadow: inset 1px 1px 1px #12358a; }
.lang { position: absolute; left: 1254px; top: 7px; width: 16px; line-height: 14px; background: #2f6fe0; text-align: center; }
.tray { position: absolute; left: 1289px; top: 0; right: 0; height: 29px; display: flex; align-items: center; background: linear-gradient(#0e8fe6, #16a0f0 10%, #119aea 70%, #0b7bd0); box-shadow: -1px 0 0 #0c50b0; }
.tray-arrow { position: absolute; left: -8px; top: 6px; width: 17px; height: 17px; border-radius: 50%; border: 1px solid #fff; background: radial-gradient(circle at 30% 30%, #7ab0f8, #2a62d8); display: flex; align-items: center; justify-content: center; }
.tray-ico { margin-left: 15px; width: 12px; height: 14px; border: 1px solid #000; background: repeating-conic-gradient(#1a8a1a 0 25%, #000 0 50%) 0 0 / 2px 2px; }
.clock { margin-left: 8px; }

.vb-status { height: 23px; flex: none; display: flex; align-items: center; justify-content: flex-end; gap: 3px; padding-right: 26px; background: #d3d3d3; }
.ctrl { font: 12.8px "Noto Sans", sans-serif; letter-spacing: 0; color: #444; margin-left: 1px; }

/* mint panel */
.panel { height: 40px; position: relative; display: flex; align-items: center; justify-content: space-between; background: #14120f; }
.launch { display: flex; align-items: center; padding-left: 6px; }
.mint { margin-right: 20px; }
.app { width: 28px; height: 28px; margin-right: 18px; border-radius: 5px; position: relative; display: flex; align-items: center; justify-content: center; }
.ap-folder { width: 30px; margin-right: 17px; }
.ap-term { background: #2a2a2a; justify-content: flex-start; align-items: flex-start; padding: 3px; font: bold 9px/9px "DejaVu Sans Mono", monospace; letter-spacing: 0; color: #eee; }
.ap-subl { background: #4a4a4a; font: bold 20px "Noto Sans", sans-serif; letter-spacing: 0; color: #f0a030; }
.ap-img { background: linear-gradient(#f08a50, #b0286e); }
.ap-gimp { background: #e05040; }
.ap-xp { width: 32px; border-radius: 0; margin-right: 0; margin-left: -2px; }
.ap-xp span { position: absolute; right: 2px; bottom: 2px; font: bold 12px/10px "DejaVu Sans", sans-serif; letter-spacing: 0; color: #fff; }
.sys { display: flex; align-items: center; padding-right: 6px; }
.sys-mon { margin-right: 13px; }
.sys-disk { margin-right: 16px; }
.sys-flag { margin-right: 15px; }
.sys-wifi { margin-right: 13px; }
.sys-note { margin-right: 13px; }
.sys-clock { font: 14.3px "Noto Sans", sans-serif; letter-spacing: 0; color: #ddd; }
.dots { position: absolute; left: 57px; bottom: 0; display: flex; gap: 14px; }
.dots span { width: 32px; height: 2px; background: #2e9ac0; }

/* context menu over the guest window */
.ctx { position: absolute; left: 368px; top: 466px; width: 260px; height: 229px; padding: 1px 2px 2px; background: #fff; border: 1px solid #aca899; box-shadow: 2px 2px 3px rgba(0,0,0,.45); }
.mi { height: 17px; line-height: 17px; padding-left: 16px; white-space: nowrap; }
.mi.dis { color: #aca899; }
.ms { height: 9px; margin: 0 1px; position: relative; }
.ms::after { content: ""; position: absolute; left: 0; right: 0; top: 3px; height: 1px; background: #aca899; }
```
